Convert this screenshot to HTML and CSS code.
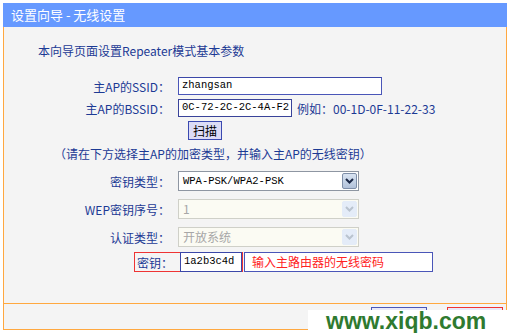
FILE: index.html
```html
<!DOCTYPE html>
<html>
<head>
  <meta charset="UTF-8"/>
  <title>设置向导 - 无线设置</title>
  <link rel="stylesheet" href="styles.css">
</head>
<body>
  <div class="win">
    <div class="title">设置向导 - 无线设置</div>
    <div class="panel">
      <p class="intro">本向导页面设置Repeater模式基本参数</p>

      <div class="row">
        <span class="label">主AP的SSID：</span>
        <div class="input wide">zhangsan</div>
      </div>
      <div class="row">
        <span class="label">主AP的BSSID：</span>
        <div class="input mac">0C-72-2C-2C-4A-F2</div>
        <span class="hint">例如：00-1D-0F-11-22-33</span>
      </div>
      <div class="row">
        <span class="label"></span>
        <button class="scan">扫描</button>
      </div>

      <p class="note">（请在下方选择主AP的加密类型，并输入主AP的无线密钥）</p>

      <div class="row sel-row">
        <span class="label">密钥类型：</span>
        <div class="select">
          <span class="val">WPA-PSK/WPA2-PSK</span>
          <span class="arrow"><svg width="9" height="6" viewBox="0 0 9 6"><path d="M1 1 L4.5 4.5 L8 1" fill="none" stroke="#1d2a48" stroke-width="2"/></svg></span>
        </div>
      </div>
      <div class="row sel-row">
        <span class="label">WEP密钥序号：</span>
        <div class="select off">
          <span class="val">1</span>
          <span class="arrow"><svg width="9" height="6" viewBox="0 0 9 6"><path d="M1 1 L4.5 4.5 L8 1" fill="none" stroke="#b9c3cf" stroke-width="2"/></svg></span>
        </div>
      </div>
      <div class="row sel-row">
        <span class="label">认证类型：</span>
        <div class="select off">
          <span class="val">开放系统</span>
          <span class="arrow"><svg width="9" height="6" viewBox="0 0 9 6"><path d="M1 1 L4.5 4.5 L8 1" fill="none" stroke="#b9c3cf" stroke-width="2"/></svg></span>
        </div>
      </div>

      <div class="key-row">
        <div class="key-box">
          <span class="key-label">密钥：</span>
          <div class="input key">1a2b3c4d</div>
        </div>
        <div class="key-tip">输入主路由器的无线密码</div>
      </div>
    </div>
    <div class="foot">
      <button class="btn back" title="上一步"></button>
      <button class="btn next" title="下一步"></button>
    </div>
  </div>
  <div class="mark">www.xiqb.com</div>
</body>
</html>
```

FILE: styles.css
```css
html, body {
    margin: 0;
    padding: 0;
    background-color: #ffffff;
    font-family: "Noto Sans CJK SC", "Liberation Sans", sans-serif;
    font-size: 12px;
    overflow: hidden;
}
.win {
    position: relative;
    width: 504px;
    margin: 3px 0 0 3px;
}
.title {
    height: 24px;
    line-height: 23px;
    padding-left: 8px;
    background-color: #6699ff;
    color: #ffffff;
    font-size: 13px;
}
.panel {
    height: 277px;
    box-sizing: border-box;
    background-color: #f4f4f4;
    border-left: 1px solid #ffa840;
    border-right: 1px solid #ffa840;
    border-bottom: 1px solid #ffa840;
    padding-top: 16px;
}
.intro {
    margin: 0 0 18px 34px;
    line-height: 16px;
    color: #1c3a94;
}
.row {
    display: flex;
    align-items: center;
    height: 18px;
    margin-bottom: 4px;
}
.label {
    width: 166px;
    text-align: right;
    color: #1c3a94;
    margin-right: 8px;
    white-space: nowrap;
}
/* text boxes */
.input {
    box-sizing: border-box;
    height: 18px;
    line-height: 15px;
    padding-left: 3px;
    border: 1px solid #4a56b8;
    border-top-color: #3b47a8;
    background-color: #ffffff;
    font-family: "Liberation Mono", monospace;
    font-size: 10.5px;
    color: #000000;
}
.wide { width: 204px; }
.mac {
    width: 114px;
    border-color: #39439a;
}
.hint {
    margin-left: 5px;
    color: #1c3a94;
}
.scan {
    margin-left: 10px;
    height: 19px;
    width: 34px;
    padding: 0;
    border: 1px solid #3a49b0;
    background-color: #dcdcf6;
    font-family: inherit;
    font-size: 12px;
    color: #000000;
}
.note {
    margin: 7px 0 0 50px;
    line-height: 16px;
    color: #1c3a94;
}
.sel-row {
    height: 20px;
    margin-top: 9px;
    margin-bottom: 0;
}
.sel-row + .sel-row { margin-top: 8px; }
/* drop-down boxes */
.select {
    display: flex;
    box-sizing: border-box;
    width: 181px;
    height: 20px;
    border: 1px solid #8e96a2;
    background-color: #ffffff;
}
.select .val {
    flex: 1;
    line-height: 18px;
    padding-left: 4px;
    font-family: "Liberation Mono", monospace;
    font-size: 10.5px;
}
.select .arrow {
    display: flex;
    align-items: center;
    justify-content: center;
    width: 15px;
    margin: 1px;
    background: linear-gradient(#d9e4f2, #b2c2da);
    border: 1px solid #7f8fa8;
    border-radius: 2px;
    box-sizing: border-box;
}
.select.off {
    border-color: #cfd0c8;
    background-color: #fbfbf3;
}
.select.off .val {
    color: #a7a7a7;
    font-family: "Noto Sans CJK SC", sans-serif;
    font-size: 12px;
}
.select.off .arrow {
    background: #e4ecf8;
    border-color: #e4ecf8;
}
.key-row {
    display: flex;
    align-items: center;
    margin: 5px 0 0 130px;
    height: 20px;
}
.key-box {
    display: flex;
    align-items: center;
    box-sizing: border-box;
    height: 20px;
    border: 1px solid #ee3333;
    padding-left: 2px;
}
.key-label {
    color: #1c3a94;
    margin-right: 7px;
}
.input.key {
    width: 62px;
    height: 20px;
    margin-top: -1px;
    margin-bottom: -1px;
    line-height: 17px;
    border-color: #3b47a8;
}
.key-tip {
    box-sizing: border-box;
    width: 189px;
    height: 20px;
    margin-left: 1px;
    padding-left: 7px;
    line-height: 18px;
    border: 1px solid #4a56b8;
    background-color: #ffffff;
    color: #ff2222;
}
.foot {
    display: flex;
    justify-content: flex-end;
    gap: 20px;
    height: 26px;
    box-sizing: border-box;
    padding: 3px 3px 0 0;
    background-color: #f4f4f4;
    border-left: 1px solid #ffa840;
    border-right: 1px solid #ffa840;
    border-bottom: 1px solid #ffa840;
}
.btn {
    width: 56px;
    height: 20px;
    padding: 0;
    background-color: #e8e8f8;
}
.back { border: 1px solid #4a56b8; }
.next { border: 1px solid #ee3333; }
/* watermark over the footer */
.mark {
    position: absolute;
    left: 308px;
    top: 310px;
    width: 202px;
    height: 23px;
    background-color: #ffffff;
    color: #2f7a2f;
    font-family: "Liberation Sans", sans-serif;
    font-weight: bold;
    font-size: 23px;
    line-height: 23px;
    padding-left: 18px;
    box-sizing: border-box;
}
```
